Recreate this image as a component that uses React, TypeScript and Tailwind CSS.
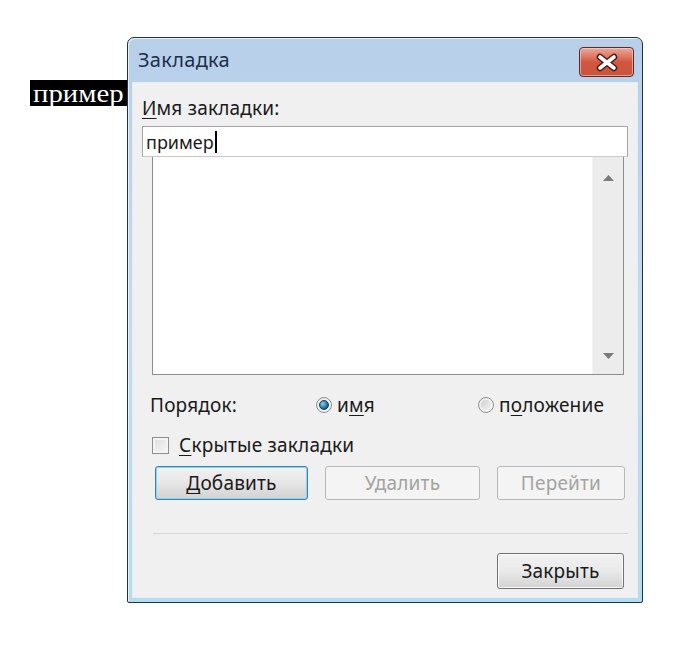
import React from "react";

const ui = { fontFamily: '"Noto Sans", "Open Sans", sans-serif' };

function U({ children }: { children: React.ReactNode }) {
  return <span className="underline decoration-1 underline-offset-[3px]">{children}</span>;
}

function Radio({ checked }: { checked?: boolean }) {
  return (
    <span className="relative flex h-[16px] w-[16px] items-center justify-center rounded-full border border-[#8e8f8f] bg-gradient-to-br from-[#e8e8e8] to-[#fafafa]">
      {checked ? (
        <span className="h-[10px] w-[10px] rounded-full border border-[#153c58] bg-[radial-gradient(circle_at_35%_35%,#8fd0f0,#1d6fa5_60%,#123e61)]" />
      ) : (
        <span className="h-[10px] w-[10px] rounded-full bg-gradient-to-br from-[#cfcfcf] to-[#f4f4f4]" />
      )}
    </span>
  );
}

export default function App() {
  return (
    <div className="min-h-[657px] w-[700px] bg-white" style={ui}>
      <div className="flex items-start pl-[30px] pt-[37px]">
        <div className="mt-[43px] flex h-[26px] w-[97px] items-center justify-center overflow-hidden bg-black">
          <span
            className="inline-block scale-x-[1.15] text-[25px] leading-none text-white"
            style={{ fontFamily: '"Liberation Serif", serif' }}
          >
            пример
          </span>
        </div>

        {/* window */}
        <div className="flex h-[566px] w-[516px] flex-col rounded-t-[7px] rounded-b-[2px] border border-[#1e3245] bg-gradient-to-b from-[#b7cfe9] via-[#c6daef] to-[#b4dcef] shadow-[inset_1px_1px_0_#e9f2fb]">
          {/* title bar */}
          <div className="flex h-[45px] shrink-0 items-start">
            <div className="pl-[10px] pt-[9px] text-[20px] leading-[26px] tracking-[0.3px] text-[#1c2f4c]">Закладка</div>
            <div className="ml-auto mr-[8px] mt-[9px] flex h-[30px] w-[55px] items-center justify-center rounded-[4px] border border-[#5b2a24] bg-gradient-to-b from-[#e9a99b] via-[#d3563f] to-[#c9543c] shadow-[inset_0_0_0_1px_rgba(255,220,210,0.55)]">
              <svg width="26" height="19" viewBox="0 0 26 19">
                <path d="M6 4 L20 15 M20 4 L6 15" stroke="#4a1a14" strokeWidth="6.5" strokeLinecap="round" />
                <path d="M6 4 L20 15 M20 4 L6 15" stroke="#ffffff" strokeWidth="3.6" strokeLinecap="round" />
              </svg>
            </div>
          </div>

          {/* client */}
          <div className="mx-[5px] mb-[5px] flex h-[514px] flex-col bg-[#f0f0f0] text-[19px] leading-[24px] tracking-[0.2px] text-[#1a1a1a] shadow-[0_0_0_1px_#e4edf7]">
            <div className="ml-[9px] mt-[13px] h-[24px]">
              <U>И</U>мя закладки:
            </div>
            <div className="ml-[9px] mt-[6px] flex h-[31px] w-[486px] items-center border border-[#a6a6a6] border-b-[#c9c9c9] bg-white pl-[3px] text-[18px] tracking-normal">
              <span>пример</span>
              <span className="ml-[1px] h-[22px] w-[2px] bg-black" />
            </div>
            <div className="ml-[19px] flex h-[218px] w-[472px] border border-t-0 border-[#8d8d8d] bg-white">
              <div className="flex-1" />
              <div className="flex w-[31px] flex-col items-center justify-between border-l border-[#f3f3f3] bg-[#ececec] pb-[15px] pt-[18px]">
                <svg width="11" height="6" viewBox="0 0 11 6">
                  <path d="M5.5 0 L11 6 L0 6 Z" fill="#7a7a7a" />
                </svg>
                <svg width="11" height="6" viewBox="0 0 11 6">
                  <path d="M0 0 L11 0 L5.5 6 Z" fill="#7a7a7a" />
                </svg>
              </div>
            </div>

            <div className="ml-[17px] mt-[18px] flex h-[24px] items-center">
              <div className="w-[166px]">Порядок:</div>
              <div className="flex w-[162px] items-center gap-[5px]">
                <Radio checked />
                <span>
                  и<U>м</U>я
                </span>
              </div>
              <div className="flex items-center gap-[5px]">
                <Radio />
                <span>
                  п<U>о</U>ложение
                </span>
              </div>
            </div>

            <div className="ml-[19px] mt-[16px] flex h-[24px] items-center gap-[10px]">
              <span className="h-[17px] w-[17px] border border-[#8e8f8f] bg-gradient-to-br from-[#dcdcdc] to-[#f7f7f7] shadow-[inset_0_0_0_2px_#f4f4f4]" />
              <span>
                <U>С</U>крытые закладки
              </span>
            </div>

            <div className="ml-[22px] mt-[9px] flex gap-[17px]">
              <div className="flex h-[34px] w-[153px] items-center justify-center rounded-[3px] border border-[#3c7fb1] bg-gradient-to-b from-[#f2f2f2] via-[#e6e6e6] to-[#d2d2d2] shadow-[inset_0_0_0_1px_#7fd8f6]">
                <span>
                  <U>Д</U>обавить
                </span>
              </div>
              <div className="flex h-[34px] w-[155px] items-center justify-center rounded-[3px] border border-[#b5b8ba] bg-[#f4f4f4] text-[#a3a3a3]">
                Удалить
              </div>
              <div className="flex h-[34px] w-[128px] items-center justify-center rounded-[3px] border border-[#b5b8ba] bg-[#f4f4f4] text-[#a3a3a3]">
                Перейти
              </div>
            </div>

            <div className="ml-[20px] mt-[33px] h-px w-[475px] bg-[#d5d5d5]" />

            <div className="ml-[364px] mt-[19px] flex h-[36px] w-[127px] items-center justify-center rounded-[3px] border border-[#707070] bg-gradient-to-b from-[#f2f2f2] via-[#e9e9e9] to-[#d3d3d3] shadow-[inset_0_0_0_1px_#fbfbfb]">
              Закрыть
            </div>
          </div>
        </div>
      </div>
    </div>
  );
}
